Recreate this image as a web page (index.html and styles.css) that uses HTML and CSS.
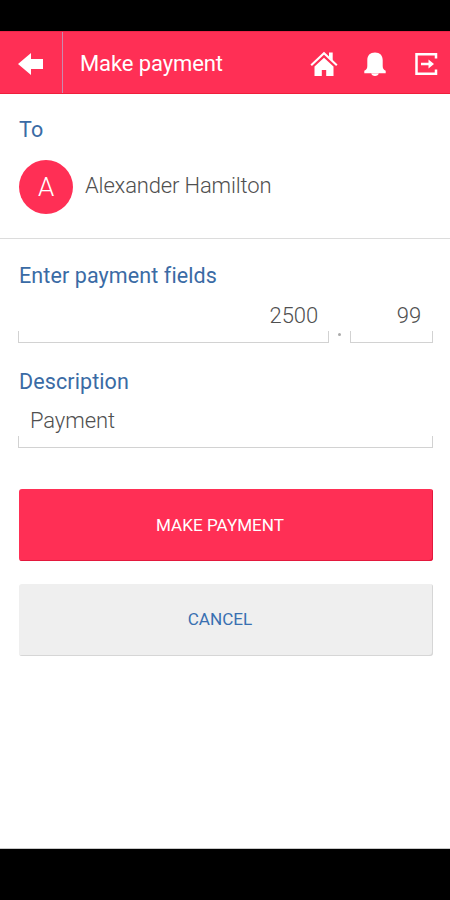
FILE: index.html
```html
<!DOCTYPE html>
<html lang="en">
<head>
<meta charset="utf-8">
<title>Make payment</title>
<link rel="stylesheet" href="styles.css">
</head>
<body>
<div class="system-bar"></div>
<header class="header">
  <div class="back">
    <svg width="26" height="24" viewBox="0 0 26 24"><path fill="#fff" d="M0 12 13 1v6h12v10H13v6z"/></svg>
  </div>
  <h1 class="title">Make payment</h1>
  <nav class="actions">
    <svg width="28" height="26" viewBox="0 0 28 26"><path fill="#fff" d="m4.500 15.500 9.500-8.700 9.500 8.700V25h-7.300v-6h-4.400v6H4.500z"/><path fill="none" stroke="#fff" stroke-width="2.100" d="M1.200 14.300 14 2.300l12.800 12"/><path fill="#fff" d="M19 1.500h3.700v8L19 6z"/></svg>
    <svg width="24" height="26" viewBox="0 0 24 26"><path fill="#fff" d="M12 1.500c-5 0-7.700 3-7.700 7.500v6c0 2.500-1 3.800-3 4.800v2.400h21.400v-2.400c-2-1-3-2.300-3-4.800V9c0-4.500-2.700-7.500-7.700-7.500zM8 22h8c-.4 2-2 3-4 3s-3.600-1-4-3z"/></svg>
    <svg width="24" height="24" viewBox="0 0 24 24"><path fill="none" stroke="#fff" stroke-width="2.500" d="M22 6.500V2.200H2.500v19.600H22v-4.300"/><path fill="#fff" d="M7 10.700h7.500V7.500l5.500 4.500-5.500 4.500v-3.200H7z"/></svg>
  </nav>
</header>
<main class="content">
  <section class="payee">
    <h2 class="label">To</h2>
    <div class="person"><span class="avatar">A</span><span class="name">Alexander Hamilton</span></div>
  </section>
  <section class="form">
    <h2 class="label">Enter payment fields</h2>
    <div class="amounts">
      <div class="field whole">2500</div>
      <span class="dot"></span>
      <div class="field cents">99</div>
    </div>
    <h2 class="label">Description</h2>
    <div class="field description">Payment</div>
    <button class="button primary"><span>MAKE PAYMENT</span></button>
    <button class="button secondary"><span>CANCEL</span></button>
  </section>
</main>
</body>
</html>
```
FILE: styles.css
```css
* { box-sizing: border-box; }
body {
  margin: 0;
  height: 900px;
  display: flex;
  flex-direction: column;
  background: #000;
  font-family: Roboto, sans-serif;
  overflow: hidden;
}
.system-bar { height: 31px; flex: none; }
.header {
  height: 63px;
  flex: none;
  display: flex;
  align-items: center;
  background: #ff2f55;
  border-top: 1px solid #f02449;
  border-bottom: 1px solid #ef1f3c;
  padding-right: 12px;
}
.back {
  width: 63px;
  height: 100%;
  flex: none;
  display: flex;
  align-items: center;
  padding: 3px 0 0 18px;
  border-right: 1px solid #c98aaf;
}
.title {
  margin: 2px 0 0 17px;
  font-size: 22px;
  font-weight: 400;
  line-height: 28px;
  letter-spacing: -0.1px;
  color: #fff;
}
.actions {
  margin: 3px 0 0 auto;
  display: flex;
  align-items: center;
}
.actions svg + svg { margin-left: 25px; }
.actions svg:last-child { margin-left: 27px; }
.content { height: 755px; flex: none; background: #fff; border-bottom: 1px solid #c8c8c8; }
.payee { height: 145px; padding: 22px 18px 0 19px; border-bottom: 1px solid #dcdcdc; }
.label {
  margin: 0;
  font-size: 21.5px;
  font-weight: 400;
  line-height: 28px;
  letter-spacing: 0.1px;
  color: #3a6ba5;
}
.person { display: flex; align-items: center; margin-top: 16px; }
.avatar {
  width: 54px;
  height: 54px;
  border-radius: 50%;
  background: #ff2f55;
  color: #fff;
  font-size: 26px;
  font-weight: 300;
  line-height: 54px;
  text-align: center;
}
.name {
  margin: -3px 0 0 12px;
  font-size: 22px;
  font-weight: 300;
  letter-spacing: -0.15px;
  color: #505050;
}
.form { padding: 23px 17px 0 18px; }
.form .label { margin-left: 1px; }
.amounts { display: flex; align-items: flex-end; margin-bottom: 25px; }
.field {
  height: 53px;
  padding: 12px 12px 0;
  font-size: 22px;
  font-weight: 300;
  line-height: 28px;
  letter-spacing: -0.1px;
  color: #505050;
  background:
    linear-gradient(#d2d2d2, #d2d2d2) left bottom / 1px 12px no-repeat,
    linear-gradient(#d2d2d2, #d2d2d2) right bottom / 1px 12px no-repeat,
    linear-gradient(#d2d2d2, #d2d2d2) left bottom / 100% 1px no-repeat;
}
.whole { width: 311px; padding-right: 11px; text-align: right; }
.cents { width: 83px; text-align: right; }
.dot { width: 3px; height: 3px; margin: 0 9px 7px; background: #aaa; border-radius: 50%; }
.description { height: 52px; margin-bottom: 41px; padding-top: 11px; }
.button {
  display: block;
  width: 414px;
  height: 72px;
  padding: 0 12px 0 0;
  margin: 0 0 23px 1px;
  border: 0;
  border-radius: 3px;
  font: 400 17.1px/24px Roboto, sans-serif;
}
.primary { background: #ff2f55; color: #fff; box-shadow: inset -1px -1px 0 #e3183d; }
.secondary { padding-bottom: 2px; background: #efefef; color: #3970b1; box-shadow: inset -1px -1px 0 #d6d6d6; }
```
